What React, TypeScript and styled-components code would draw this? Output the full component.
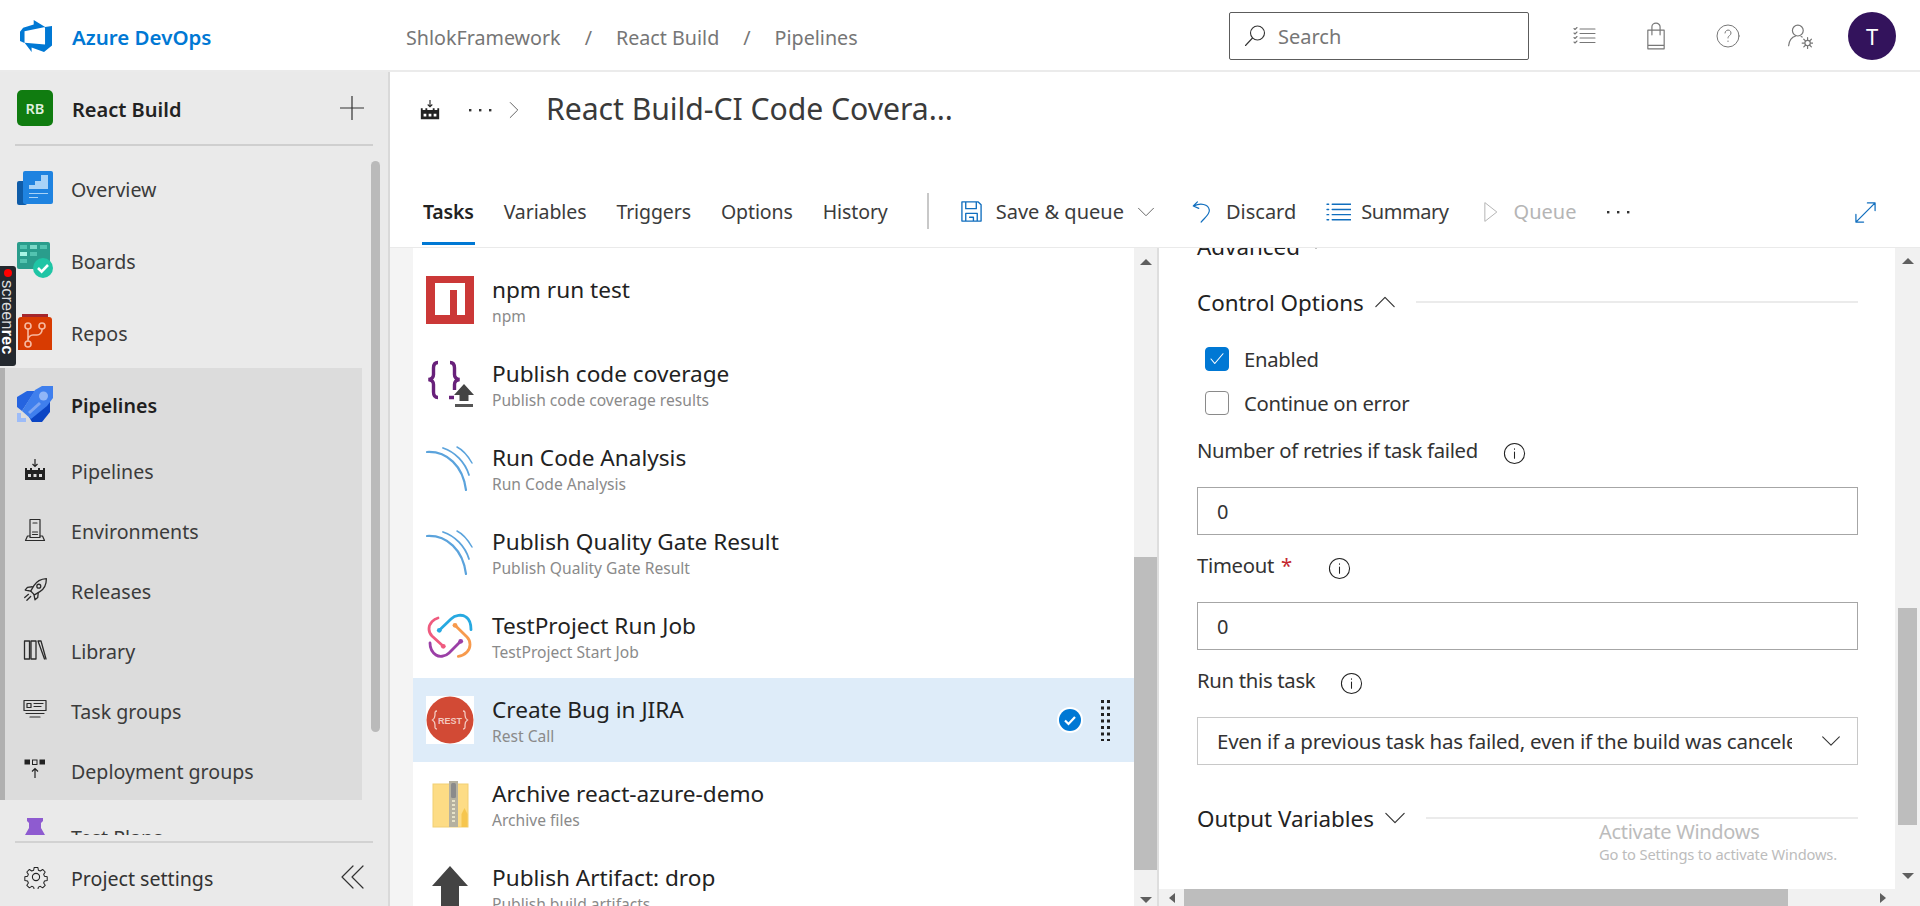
import React from "react";
import styled, { createGlobalStyle } from "styled-components";

const font = `"Noto Sans", "Open Sans", "Liberation Sans", sans-serif`;

const GlobalStyle = createGlobalStyle`
  html, body {
    margin: 0;
    padding: 0;
    background: #fff;
    font-family: ${font};
    color: #333;
  }
  * { box-sizing: border-box; }
`;

const Page = styled.div`
  position: relative;
  width: 1920px;
  height: 906px;
  overflow: hidden;
  display: flex;
  flex-direction: column;
`;

/* ---------- top bar ---------- */
const TopBar = styled.header`
  height: 72px;
  flex: none;
  display: flex;
  align-items: center;
  border-bottom: 2px solid #ebebeb;
  padding: 2px 24px 0 0;
`;
const Brand = styled.div`
  width: 406px;
  padding-left: 18px;
  display: flex;
  align-items: center;
  gap: 18px;
  font-size: 20.5px;
  font-weight: 600;
  color: #0078d4;
`;
const BrandText = styled.span`
  padding-top: 2px;
`;
const Crumbs = styled.nav`
  display: flex;
  align-items: center;
  gap: 24px;
  padding-top: 2px;
  font-size: 19.7px;
  color: #767676;
`;
const SearchBox = styled.div`
  margin-left: auto;
  width: 300px;
  height: 48px;
  border: 1px solid #5c5c5c;
  border-radius: 2px;
  display: flex;
  align-items: center;
  gap: 11px;
  padding-left: 13px;
  font-size: 20px;
  color: #767676;
`;
const HeaderIcons = styled.div`
  margin-left: 19px;
  display: flex;
`;
const HeaderIcon = styled.span`
  width: 72px;
  height: 48px;
  display: flex;
  align-items: center;
  justify-content: center;
  color: #777;
`;
const Avatar = styled.div`
  margin-left: 12px;
  width: 48px;
  height: 48px;
  border-radius: 50%;
  background: #33135c;
  color: #fff;
  font-size: 22px;
  display: flex;
  align-items: center;
  justify-content: center;
`;

/* ---------- sidebar ---------- */
const Body = styled.div`
  flex: 1;
  min-height: 0;
  display: flex;
`;
const Sidebar = styled.aside`
  position: relative;
  width: 390px;
  flex: none;
  display: flex;
  flex-direction: column;
  background: #eaeaea;
  border-right: 2px solid #d9d9d9;
`;
const ProjectRow = styled.div`
  height: 74px;
  flex: none;
  margin: 0 15px;
  padding: 0 2px;
  border-bottom: 2px solid #cfcfcf;
  display: flex;
  align-items: center;
  font-size: 20px;
  font-weight: 600;
  color: #222;
`;
const ProjectTile = styled.div`
  width: 36px;
  height: 36px;
  border-radius: 5px;
  background: #107c10;
  color: #dff0df;
  font-size: 14.5px;
  display: flex;
  align-items: center;
  justify-content: center;
  margin-right: 19px;
`;
const ProjectName = styled.span`
  padding-top: 2px;
`;
const ProjectAdd = styled.span`
  margin-left: auto;
  margin-right: 7px;
  display: flex;
`;
const NavArea = styled.div`
  flex: 1;
  min-height: 0;
  overflow: hidden;
  padding-top: 6px;
`;
const NavItem = styled.div<{ $bold?: boolean }>`
  height: 72px;
  display: flex;
  align-items: center;
  padding-left: 17px;
  gap: 18px;
  font-size: 19.6px;
  font-weight: ${(p) => (p.$bold ? 600 : 400)};
  color: ${(p) => (p.$bold ? "#1f1f1f" : "#3b3b3b")};
`;
const NavLabel = styled.span`
  padding-top: 2px;
`;
const NavIconBox = styled.span`
  width: 36px;
  height: 36px;
  flex: none;
  display: flex;
  align-items: center;
  justify-content: center;
  color: #2b2b2b;
`;
const NavGroup = styled.div`
  width: 362px;
  height: 432px;
  background: #dcdcdc;
  border-left: 5px solid #b0b0b0;
`;
const GroupItem = styled(NavItem)`
  padding-left: 12px;
`;
const SubItem = styled(GroupItem)`
  height: 60px;
`;
const SideThumb = styled.div`
  position: absolute;
  left: 371px;
  top: 89px;
  width: 9px;
  height: 571px;
  border-radius: 5px;
  background: #bababa;
`;
const SideFooter = styled.div`
  height: 65px;
  flex: none;
  margin: 6px 15px 0;
  padding: 4px 9px 0;
  border-top: 2px solid #d2d2d2;
  display: flex;
  align-items: center;
  gap: 23px;
  font-size: 19.6px;
  color: #333;
`;
const FooterLabel = styled.span`
  padding-top: 4px;
`;
const CollapseIcon = styled.span`
  margin-left: auto;
  display: flex;
`;
const RecBadge = styled.div`
  position: absolute;
  left: 0;
  top: 194px;
  width: 16px;
  height: 100px;
  background: #23282e;
  border-radius: 0 3px 3px 0;
  color: #dcdcdc;
  font-family: "Liberation Sans", sans-serif;
  font-size: 16.5px;
  line-height: 17px;
  writing-mode: vertical-rl;
  padding-top: 14px;
  white-space: nowrap;
  overflow: hidden;
  &::before {
    content: "";
    position: absolute;
    left: 4px;
    top: 3px;
    width: 8px;
    height: 8px;
    border-radius: 50%;
    background: #f00;
  }
  b {
    color: #fff;
    font-weight: 700;
  }
`;

/* ---------- main ---------- */
const Main = styled.main`
  flex: 1;
  min-width: 0;
  display: flex;
  flex-direction: column;
`;
const TitleRow = styled.div`
  height: 76px;
  flex: none;
  display: flex;
  align-items: center;
  padding-left: 29px;
  color: #333;
`;
const TitleDots = styled.span`
  margin-left: 27px;
  display: flex;
`;
const TitleChevron = styled.span`
  margin-left: 13px;
  display: flex;
`;
const Title = styled.h1`
  margin: -3px 0 0 23px;
  font-size: 30.2px;
  font-weight: 400;
  color: #3a3a3a;
  letter-spacing: -0.05px;
`;
const TabBar = styled.div`
  height: 70px;
  flex: none;
  margin-top: 30px;
  display: flex;
  align-items: center;
  padding: 0 43px 0 33px;
  border-bottom: 1px solid #eaeaea;
  font-size: 20px;
  color: #3b3b3b;
`;
const Tab = styled.div<{ $active?: boolean }>`
  position: relative;
  align-self: stretch;
  margin-right: 30px;
  padding-bottom: 3px;
  display: flex;
  align-items: center;
  font-size: 19.5px;
  letter-spacing: ${(p) => (p.$active ? "-0.2px" : "-0.1px")};
  font-weight: ${(p) => (p.$active ? 600 : 400)};
  color: ${(p) => (p.$active ? "#222" : "#3b3b3b")};
  ${(p) =>
    p.$active &&
    `&::after {
      content: "";
      position: absolute;
      left: -1px;
      right: -1px;
      bottom: 2px;
      height: 3px;
      background: #0078d4;
    }`}
`;
const ToolSep = styled.div`
  width: 2px;
  height: 36px;
  margin: -4px 31px 0 9px;
  background: #c8c8c8;
`;
const ToolItem = styled.div<{ $gap?: number; $inner?: number; $disabled?: boolean }>`
  display: flex;
  align-items: center;
  gap: ${(p) => p.$inner ?? 13}px;
  padding-bottom: 2px;
  margin-left: ${(p) => p.$gap ?? 0}px;
  color: ${(p) => (p.$disabled ? "#b5b5b5" : "#3b3b3b")};
`;
const NarrowLabel = styled.span`
  letter-spacing: -0.45px;
`;
const ExpandIcon = styled.span`
  margin-left: auto;
  display: flex;
`;
const Panels = styled.div`
  flex: 1;
  min-height: 0;
  display: flex;
`;
const Gutter = styled.div`
  width: 23px;
  flex: none;
  background: #f4f4f4;
`;
const TaskList = styled.div`
  flex: 1;
  min-width: 0;
  overflow: hidden;
  padding-top: 10px;
`;
const TaskRow = styled.div<{ $selected?: boolean }>`
  height: 84px;
  display: flex;
  align-items: center;
  padding: 0 13px;
  background: ${(p) => (p.$selected ? "#deecf9" : "transparent")};
`;
const TaskIcon = styled.span`
  width: 48px;
  height: 48px;
  flex: none;
  display: flex;
  margin-right: 18px;
`;
const TaskText = styled.div`
  flex: 1;
  min-width: 0;
  padding-top: 4px;
  display: flex;
  flex-direction: column;
`;
const TaskName = styled.div`
  font-size: 22.6px;
  line-height: 28px;
  color: #222;
`;
const TaskKind = styled.div`
  margin-top: -1px;
  font-size: 15.6px;
  line-height: 26px;
  color: #8a8a8a;
`;
const TaskState = styled.span`
  display: flex;
  align-items: center;
  gap: 18px;
  margin-right: 11px;
`;

/* ---------- scrollbars ---------- */
const VTrack = styled.div<{ $width: number }>`
  width: ${(p) => p.$width}px;
  flex: none;
  display: flex;
  flex-direction: column;
  align-items: center;
  background: #f1f1f1;
`;
const Arrow = styled.div<{ $dir: "up" | "down" | "left" | "right"; $size: number }>`
  flex: none;
  width: ${(p) => (p.$dir === "up" || p.$dir === "down" ? "100%" : `${p.$size}px`)};
  height: ${(p) => (p.$dir === "up" || p.$dir === "down" ? `${p.$size}px` : "100%")};
  display: flex;
  align-items: center;
  justify-content: center;
  &::before {
    content: "";
    width: 0;
    height: 0;
    border: 5px solid transparent;
    border-width: ${(p) => (p.$dir === "up" || p.$dir === "down" ? "0 6px" : "5px 0")};
    ${(p) => `border-${{ up: "bottom", down: "top", left: "right", right: "left" }[p.$dir]}: 6px solid #5f5f5f;`}
  }
`;
const VThumb = styled.div<{ $top: number; $height: number; $width: number }>`
  flex: none;
  width: ${(p) => p.$width}px;
  height: ${(p) => p.$height}px;
  margin-top: ${(p) => p.$top}px;
  margin-bottom: auto;
  background: #bdbdbd;
`;
const HTrack = styled.div`
  height: 17px;
  flex: none;
  display: flex;
  background: #f1f1f1;
  padding-right: 25px;
`;
const HThumb = styled.div`
  width: 604px;
  margin-right: auto;
  background: #bdbdbd;
`;

/* ---------- right pane ---------- */
const RightPane = styled.section`
  position: relative;
  width: 763px;
  flex: none;
  display: flex;
  flex-direction: column;
  border-left: 2px solid #dedede;
`;
const RightRow = styled.div`
  flex: 1;
  min-height: 0;
  display: flex;
`;
const Form = styled.div`
  flex: 1;
  min-width: 0;
  overflow: hidden;
  padding: 0 37px 0 38px;
`;
const SectionHead = styled.div<{ $top: number }>`
  height: 30px;
  margin-top: ${(p) => p.$top}px;
  display: flex;
  align-items: center;
  gap: 10px;
  font-size: 22.4px;
  color: #222;
  white-space: nowrap;
`;
const HeadLine = styled.div`
  flex: 1;
  height: 2px;
  margin-left: 10px;
  background: #ebebeb;
`;
const CheckRow = styled.div<{ $top?: number }>`
  height: 44px;
  margin-top: ${(p) => p.$top ?? 0}px;
  padding-left: 8px;
  display: flex;
  align-items: center;
  gap: 15px;
  font-size: 20.3px;
  letter-spacing: -0.3px;
  color: #333;
`;
const CheckBox = styled.span<{ $checked?: boolean }>`
  width: 24px;
  height: 24px;
  border-radius: 4px;
  display: flex;
  align-items: center;
  justify-content: center;
  background: ${(p) => (p.$checked ? "#0078d4" : "#fff")};
  border: 1px solid ${(p) => (p.$checked ? "#0078d4" : "#8a8a8a")};
`;
const FieldLabel = styled.div<{ $top: number }>`
  height: 30px;
  margin-top: ${(p) => p.$top}px;
  margin-bottom: 22px;
  display: flex;
  align-items: center;
  font-size: 20.3px;
  letter-spacing: -0.3px;
  color: #333;
`;
const Required = styled.span`
  color: #c4262e;
  margin-left: 7px;
  margin-right: 11px;
`;
const InfoIcon = styled.span`
  margin-left: 25px;
  margin-top: 6px;
  display: flex;
`;
const TextInput = styled.div`
  height: 48px;
  border: 1px solid #a6a6a6;
  padding-left: 19px;
  display: flex;
  align-items: center;
  font-size: 20px;
  color: #333;
`;
const SelectBox = styled(TextInput)`
  border-color: #c8c8c8;
  padding-right: 16px;
  font-size: 20.5px;
  letter-spacing: -0.25px;
`;
const SelectText = styled.span`
  width: 575px;
  overflow: hidden;
  white-space: nowrap;
`;
const SelectChevron = styled.span`
  margin-left: auto;
  display: flex;
`;
const ActivateNote = styled.div`
  position: absolute;
  left: 440px;
  bottom: 41px;
  color: #bcbcbc;
  font-size: 20px;
  line-height: 24px;
  letter-spacing: -0.3px;
  small {
    display: block;
    font-size: 14.7px;
    line-height: 21px;
    letter-spacing: -0.15px;
  }
`;

/* ---------- icons ---------- */
const Line = ({ size, children, color = "currentColor", sw = 1.2 }: { size: number; children: React.ReactNode; color?: string; sw?: number }) => (
  <svg width={size} height={size} viewBox="0 0 24 24" fill="none" stroke={color} strokeWidth={sw} strokeLinecap="round" strokeLinejoin="round">
    {children}
  </svg>
);

const AzureLogo = () => (
  <svg width="36" height="36" viewBox="0 0 18 18">
    <path fill="#0078d4" d="M17 4v9.74l-4 3.28-6.2-2.26V17L3.29 12.41l10.23.8V4.44Zm-3.41.49L7.85 1V3.29L2.58 4.84 1 6.87v4.61l2.26 1V6.57Z" />
  </svg>
);
const OverviewIcon = () => (
  <svg width="36" height="36" viewBox="0 0 36 36">
    <rect x="0" y="11" width="10" height="24" rx="2" fill="#0f5ca8" />
    <rect x="6" y="1" width="30" height="33" rx="2" fill="#1f83e0" />
    <path d="M12 19v-4h6v-4h6V5h7v14z" fill="#a9d3f7" />
    <rect x="12" y="23" width="19" height="1" fill="#a9d3f7" />
    <rect x="12" y="27" width="9" height="1" fill="#a9d3f7" />
  </svg>
);
const BoardsIcon = () => (
  <svg width="36" height="36" viewBox="0 0 36 36">
    <rect x="0" y="0" width="33" height="27" rx="2" fill="#2a9d8c" />
    <rect x="3" y="3" width="7" height="4" fill="#53c3b0" />
    <rect x="13" y="3" width="7" height="4" fill="#7dd9c8" />
    <rect x="23" y="3" width="7" height="4" fill="#53c3b0" />
    <rect x="3" y="10" width="7" height="4" fill="#a8f5e5" />
    <rect x="13" y="10" width="7" height="4" fill="#53c3b0" />
    <rect x="3" y="17" width="7" height="4" fill="#53c3b0" />
    <circle cx="26" cy="26" r="10" fill="#1fc5a5" />
    <path d="M21 26l3.6 3.6 6.4-6.6" fill="none" stroke="#fff" strokeWidth="2.6" />
  </svg>
);
const ReposIcon = () => (
  <svg width="36" height="36" viewBox="0 0 36 36">
    <path d="M5 0h26v6H5z" fill="#a4262c" />
    <path d="M1 6a3 3 0 0 1 3-3h28a3 3 0 0 1 3 3v30H1z" fill="#d83b01" />
    <path d="M3 36V8a4 4 0 0 1 4-4h-3a3 3 0 0 0-3 3v29z" fill="#c23301" />
    <g fill="none" stroke="#f7b9a0" strokeWidth="1.6">
      <circle cx="11" cy="12" r="3" />
      <circle cx="25" cy="12" r="3" />
      <circle cx="11" cy="30" r="3" />
      <path d="M11 15v12M25 15v1a5 5 0 0 1-5 5h-4a5 5 0 0 0-5 5" />
    </g>
  </svg>
);
const PipelinesBrandIcon = () => (
  <svg width="36" height="36" viewBox="0 0 36 36">
    <path d="M0 11l10-6h8L5 25l-5-4z" fill="#2564e0" />
    <path d="M33 14v12l-8 10H15l-3-5z" fill="#0b45c4" />
    <path d="M18 4l7-4h11v12l-6 8-16 13-9-8z" fill="#3f7fed" />
    <circle cx="26.5" cy="10" r="4.5" fill="#91b6f7" />
    <path d="M12 27l11-10" stroke="#7ea6f2" strokeWidth="3" />
    <path d="M0 27h4v5h5v4H0z" fill="#9dbcf8" />
  </svg>
);
const FactoryIcon = ({ size = 24 }: { size?: number }) => (
  <svg width={size} height={size} viewBox="0 0 24 24" fill="none">
    <path d="M12 1v7.5M9.5 6L12 8.5 14.5 6" stroke="#222" strokeWidth="1.2" />
    <path
      fillRule="evenodd"
      d="M2 10h2v2h3v-2h2v2h6v-2h2v2h3v-2h2v12H2z M5 16v3h3v-3z M10.5 16v3h3v-3z M16 16v3h3v-3z"
      fill="#222"
    />
  </svg>
);
const EnvironmentsIcon = () => (
  <Line size={24}>
    <path d="M7 1.5h10v18H7zM9.5 14h5M9.5 16.5h5M10 5h4" />
    <path d="M7 18H4.5L2.5 22.5h19L19.5 18H17" />
  </Line>
);
const ReleasesIcon = () => (
  <Line size={26}>
    <path d="M22.5 1.5c-5 .3-9 2.4-11.5 6.5L8 13l3.5 3.5 5-3c4-2.5 6-6.5 6-12z" />
    <circle cx="15.5" cy="8.5" r="1.8" />
    <path d="M9.5 9L5 9.5 3 12l5 1M15 14.5L14.5 19 12 21l-1-5M6 16l-3.5 3M8 18l-3.5 3.5" />
  </Line>
);
const LibraryIcon = () => (
  <Line size={24} sw={1.3}>
    <path d="M1.5 3h5v18h-5zM8 3h5v18H8zM15 3l6.5 18M18 3l5 18M15 3h3" />
  </Line>
);
const TaskGroupsIcon = () => (
  <Line size={24} sw={1.2}>
    <path d="M1 2.5h22v10H1zM4 5.5h4v4H4zM11 5.5h9M11 8.5h7" />
    <path d="M3 15.5h18M7 19h10" />
  </Line>
);
const DeployGroupsIcon = () => (
  <svg width="24" height="24" viewBox="0 0 24 24" fill="none">
    <rect x="1.5" y="1.5" width="5.5" height="5" fill="#222" />
    <rect x="9.5" y="2" width="4.5" height="4.5" stroke="#222" />
    <rect x="16.5" y="1.5" width="5.5" height="5" fill="#222" />
    <path d="M12 20v-9M9 13.5l3-3 3 3" stroke="#222" strokeWidth="1.2" />
  </svg>
);
const TestPlansIcon = () => (
  <svg width="36" height="36" viewBox="0 0 36 36">
    <path d="M10 0h16v3l-2 2v5l4 7v5H8v-5l4-7V5l-2-2z" fill="#8e5bd0" />
    <path d="M16 22h4v14h-4z" fill="#6b3fb0" />
  </svg>
);
const GearIcon = () => (
  <Line size={24} sw={1.1} color="#222">
    <circle cx="12" cy="12" r="3.6" />
    <path d="M10 1.5h4l.6 3 2.1.9 2.6-1.7 2.8 2.8-1.7 2.6.9 2.1 3 .6v4l-3 .6-.9 2.1 1.7 2.6-2.8 2.8-2.6-1.7-2.1.9-.6 3h-4l-.6-3-2.1-.9-2.6 1.7-2.8-2.8 1.7-2.6-.9-2.1-3-.6v-4l3-.6.9-2.1-1.7-2.6 2.8-2.8 2.6 1.7 2.1-.9z" transform="translate(1.1 1.1) scale(.91)" />
  </Line>
);
const SearchIcon = () => (
  <Line size={24} sw={1.1} color="#333">
    <circle cx="14.5" cy="9" r="7" />
    <path d="M9.5 14L2.5 21.5" />
  </Line>
);
const DotsIcon = ({ width = 24 }: { width?: number }) => (
  <svg width={width} height="4" viewBox="0 0 24 4" fill="#333">
    <rect x="1" y="1" width="2.4" height="2.4" />
    <rect x="11" y="1" width="2.4" height="2.4" />
    <rect x="21" y="1" width="2.4" height="2.4" />
  </svg>
);

const NpmIcon = () => (
  <svg width="48" height="48" viewBox="0 0 48 48">
    <rect width="48" height="48" fill="#cb3837" />
    <path d="M9 7h30v32H31V14h-7v25H9z" fill="#fff" />
  </svg>
);
const CoverageIcon = () => (
  <svg width="48" height="48" viewBox="0 0 48 48" fill="none">
    <path d="M12 2.5C8.5 2.5 7.5 4.5 7.5 8v6.5c0 3-1.7 4.5-5 5 3.3.5 5 2 5 5V32c0 3.5 1 5.5 4.5 5.5" stroke="#68217a" strokeWidth="3.4" />
    <path d="M24 2.5c3.5 0 4.5 2 4.5 5.5v6.5c0 3 1.7 4.5 5 5-3.3.5-5 2-5 5V30M23 37.5h5" stroke="#68217a" strokeWidth="3.4" />
    <path d="M38 24L28 35h5.5v6h9v-6H48z" fill="#444" />
    <rect x="29" y="44" width="18" height="3" fill="#555" />
  </svg>
);
const SonarIcon = () => (
  <svg width="48" height="48" viewBox="0 0 48 48" fill="none" stroke="#5ba3dc" strokeLinecap="round">
    <path d="M1 8c20-1 36 14 39 38" strokeWidth="2.2" />
    <path d="M17 4c12 4 22 14 26 27" strokeWidth="1.8" />
    <path d="M31 3c6 3 11 9 15 16" strokeWidth="1.5" />
  </svg>
);
const TestProjectIcon = () => (
  <svg width="48" height="48" viewBox="0 0 48 48" fill="none" strokeWidth="2.8" strokeLinecap="round">
    <path d="M12 6C8 7 3 11 3 17c0 3 1 5 3 7l11.3 10.3" stroke="#ef5b7f" />
    <path d="M13.3 18.3L25 7c4-4 11-5 15-2 3 2 5 7 5 12.7" stroke="#27a9e1" />
    <path d="M29 13.3L41 25c4 4 4 11 0 15-2 2-5 4-8.7 4.3" stroke="#f79a4d" />
    <path d="M34.7 29.3L23 41c-4 4-10 4-13 2-3-2-6-6-6-12" stroke="#9b3fa6" />
    <circle cx="17.3" cy="34.3" r="2.4" fill="#ef5b7f" />
    <circle cx="13.3" cy="18.3" r="2.4" fill="#27a9e1" />
    <circle cx="29" cy="13.3" r="2.4" fill="#f79a4d" />
    <circle cx="34.7" cy="29.3" r="2.4" fill="#9b3fa6" />
  </svg>
);
const RestIcon = () => (
  <svg width="48" height="48" viewBox="0 0 48 48">
    <rect width="48" height="48" fill="#fff" />
    <circle cx="24" cy="24" r="23.5" fill="#d24a35" />
    <text x="24" y="27.5" textAnchor="middle" fontSize="9" fontWeight="700" fill="#f3c9bf" fontFamily="Liberation Sans, sans-serif">
      REST
    </text>
    <path d="M11 15c-2.5 0-2 2-2 4 0 3-1 4-2.5 5 1.5 1 2.5 2 2.5 5 0 2-.5 4 2 4M37 15c2.5 0 2 2 2 4 0 3 1 4 2.5 5-1.5 1-2.5 2-2.5 5 0 2 .5 4-2 4" fill="none" stroke="#f3c9bf" strokeWidth="1.3" />
  </svg>
);
const ZipIcon = () => (
  <svg width="48" height="48" viewBox="0 0 48 48">
    <rect x="7" y="4" width="35" height="43" fill="#fddc85" />
    <rect x="7" y="4" width="35" height="43" fill="none" stroke="#f1cf74" />
    <rect x="23" y="1" width="9" height="46" fill="#b5b1a0" />
    <rect x="25" y="3" width="5" height="15" rx="1.5" fill="#8b8b8b" />
    <path d="M26 20h3v2h-3zM26 24h3v2h-3zM26 28h3v2h-3zM26 32h3v2h-3zM26 36h3v2h-3zM26 40h3v2h-3z" fill="#e6e2c8" />
    <path d="M35.5 34l3-6 3 6v13h-6z" fill="#f6c64f" />
  </svg>
);
const UpArrowIcon = () => (
  <svg width="48" height="48" viewBox="0 0 48 48">
    <path d="M24 2L6 22h9v26h18V22h9z" fill="#444" />
  </svg>
);
const SelectedCheck = () => (
  <svg width="26" height="26" viewBox="0 0 26 26">
    <circle cx="13" cy="13" r="13" fill="#fff" />
    <circle cx="13" cy="13" r="11" fill="#0078d4" />
    <path d="M8 13.5l3.5 3.5L18 10" fill="none" stroke="#fff" strokeWidth="2.2" />
  </svg>
);
const DragDots = () => (
  <svg width="9" height="41" viewBox="0 0 9 41" fill="#222">
    {[0, 1, 2, 3, 4, 5, 6].map((r) => (
      <g key={r}>
        <rect x="0" y={r * 6.5} width="3" height="3" />
        <rect x="6" y={r * 6.5} width="3" height="3" />
      </g>
    ))}
  </svg>
);
const Info = () => (
  <Line size={23} sw={1.1} color="#222">
    <circle cx="12" cy="12" r="10.5" />
    <path d="M12 10.5v6.5M12 7v.5" />
  </Line>
);
const Chevron = ({ up, size = 22, color = "#333" }: { up?: boolean; size?: number; color?: string }) => (
  <Line size={size} sw={1.3} color={color}>
    <path d={up ? "M2 17L12 7l10 10" : "M2 7l10 10L22 7"} />
  </Line>
);

const sectionItems = [
  { label: "Pipelines", icon: <FactoryIcon /> },
  { label: "Environments", icon: <EnvironmentsIcon /> },
  { label: "Releases", icon: <ReleasesIcon /> },
  { label: "Library", icon: <LibraryIcon /> },
  { label: "Task groups", icon: <TaskGroupsIcon /> },
  { label: "Deployment groups", icon: <DeployGroupsIcon /> },
];

const tasks = [
  { name: "npm run test", kind: "npm", icon: <NpmIcon /> },
  { name: "Publish code coverage", kind: "Publish code coverage results", icon: <CoverageIcon /> },
  { name: "Run Code Analysis", kind: "Run Code Analysis", icon: <SonarIcon /> },
  { name: "Publish Quality Gate Result", kind: "Publish Quality Gate Result", icon: <SonarIcon /> },
  { name: "TestProject Run Job", kind: "TestProject Start Job", icon: <TestProjectIcon /> },
  { name: "Create Bug in JIRA", kind: "Rest Call", icon: <RestIcon />, selected: true },
  { name: "Archive react-azure-demo", kind: "Archive files", icon: <ZipIcon /> },
  { name: "Publish Artifact: drop", kind: "Publish build artifacts", icon: <UpArrowIcon /> },
];

export default function App() {
  return (
    <Page>
      <GlobalStyle />
      <TopBar>
        <Brand>
          <AzureLogo />
          <BrandText>Azure DevOps</BrandText>
        </Brand>
        <Crumbs>
          <span>ShlokFramework</span>
          <span>/</span>
          <span>React Build</span>
          <span>/</span>
          <span>Pipelines</span>
        </Crumbs>
        <SearchBox>
          <SearchIcon />
          Search
        </SearchBox>
        <HeaderIcons>
          <HeaderIcon>
            <Line size={24} sw={1.1}>
              <path d="M8 5h15M8 9.5h15M8 14h15M8 18.5h15M2 4.5l1 1 2-2M2 9l1 1 2-2M2 13.5l1 1 2-2M2 18l1 1 2-2" />
            </Line>
          </HeaderIcon>
          <HeaderIcon>
            <Line size={28} sw={1}>
              <path d="M5 7h14v16H5zM8.5 7V4a3.5 3 0 0 1 7 0v3M8.5 7v4M15.5 7v4M5 20h14" />
            </Line>
          </HeaderIcon>
          <HeaderIcon>
            <Line size={24} sw={1}>
              <circle cx="12" cy="12" r="11" />
              <path d="M9 9a3 3 0 1 1 4.5 2.6c-1 .6-1.5 1.3-1.5 2.4M12 17v.5" />
            </Line>
          </HeaderIcon>
          <HeaderIcon>
            <Line size={26} sw={1.1}>
              <circle cx="10" cy="7" r="5" />
              <path d="M1.5 21c.5-5 3-8 6.5-9M14 13l-1-.5" />
              <circle cx="19" cy="18.5" r="2.5" />
              <path d="M19 13.5v2M19 21.5v2M14 18.5h2M22 18.5h2M15.5 15l1.5 1.5M21 20.5l1.5 1.5M15.5 22l1.5-1.5M21 16.5l1.5-1.5" />
            </Line>
          </HeaderIcon>
        </HeaderIcons>
        <Avatar>T</Avatar>
      </TopBar>
      <Body>
        <Sidebar>
          <ProjectRow>
            <ProjectTile>RB</ProjectTile>
            <ProjectName>React Build</ProjectName>
            <ProjectAdd>
              <Line size={24} sw={1.2} color="#333">
                <path d="M12 0v24M0 12h24" />
              </Line>
            </ProjectAdd>
          </ProjectRow>
          <NavArea>
            <NavItem>
              <NavIconBox>
                <OverviewIcon />
              </NavIconBox>
              <NavLabel>Overview</NavLabel>
            </NavItem>
            <NavItem>
              <NavIconBox>
                <BoardsIcon />
              </NavIconBox>
              <NavLabel>Boards</NavLabel>
            </NavItem>
            <NavItem>
              <NavIconBox>
                <ReposIcon />
              </NavIconBox>
              <NavLabel>Repos</NavLabel>
            </NavItem>
            <NavGroup>
              <GroupItem $bold>
                <NavIconBox>
                  <PipelinesBrandIcon />
                </NavIconBox>
                <NavLabel>Pipelines</NavLabel>
              </GroupItem>
              {sectionItems.map((d) => (
                <SubItem key={d.label}>
                  <NavIconBox>{d.icon}</NavIconBox>
                  <NavLabel>{d.label}</NavLabel>
                </SubItem>
              ))}
            </NavGroup>
            <NavItem>
              <NavIconBox>
                <TestPlansIcon />
              </NavIconBox>
              <NavLabel>Test Plans</NavLabel>
            </NavItem>
          </NavArea>
          <SideFooter>
            <GearIcon />
            <FooterLabel>Project settings</FooterLabel>
            <CollapseIcon>
              <Line size={24} sw={1.2} color="#333">
                <path d="M13 1L2 12l11 11M23 1L12 12l11 11" />
              </Line>
            </CollapseIcon>
          </SideFooter>
          <SideThumb />
          <RecBadge>
            screen<b>rec</b>
          </RecBadge>
        </Sidebar>
        <Main>
          <TitleRow>
            <FactoryIcon size={22} />
            <TitleDots>
              <DotsIcon />
            </TitleDots>
            <TitleChevron>
              <Line size={18} sw={1.2} color="#555">
                <path d="M7 2l10 10L7 22" />
              </Line>
            </TitleChevron>
            <Title>React Build-CI Code Covera...</Title>
          </TitleRow>
          <TabBar>
            <Tab $active>Tasks</Tab>
            <Tab>Variables</Tab>
            <Tab>Triggers</Tab>
            <Tab>Options</Tab>
            <Tab>History</Tab>
            <ToolSep />
            <ToolItem>
              <Line size={23} sw={1.4} color="#106ebe">
                <path d="M2 2h17l3 3v17H2zM6 2v7h11V2M6 22v-8h12v8M10 18h4v4" />
              </Line>
              Save &amp; queue
              <Chevron size={18} color="#666" />
            </ToolItem>
            <ToolItem $gap={36}>
              <Line size={22} sw={1.3} color="#106ebe">
                <path d="M3 5.5C10 2 19 3 20 10c.5 5-6 9-9 13M7 1L2.5 5.5l6 2.5" />
              </Line>
              Discard
            </ToolItem>
            <ToolItem $gap={30} $inner={10}>
              <Line size={25} sw={1.4} color="#106ebe">
                <path d="M6 5h18M6 10h18M6 15h18M6 20h18" />
                <path d="M1 5h1.5M1 10h1.5M1 15h1.5M1 20h1.5" />
              </Line>
              <NarrowLabel>Summary</NarrowLabel>
            </ToolItem>
            <ToolItem $gap={32} $disabled>
              <Line size={20} sw={1.2} color="#b5b5b5">
                <path d="M5 1l14 11L5 23z" />
              </Line>
              Queue
            </ToolItem>
            <ToolItem $gap={29}>
              <DotsIcon width={26} />
            </ToolItem>
            <ExpandIcon>
              <Line size={23} sw={1.3} color="#106ebe">
                <path d="M2 22L22 2M14 2h8v8M2 14v8h8" />
              </Line>
            </ExpandIcon>
          </TabBar>
          <Panels>
            <Gutter />
            <TaskList>
              {tasks.map((t) => (
                <TaskRow key={t.name} $selected={t.selected}>
                  <TaskIcon>{t.icon}</TaskIcon>
                  <TaskText>
                    <TaskName>{t.name}</TaskName>
                    <TaskKind>{t.kind}</TaskKind>
                  </TaskText>
                  {t.selected && (
                    <TaskState>
                      <SelectedCheck />
                      <DragDots />
                    </TaskState>
                  )}
                </TaskRow>
              ))}
            </TaskList>
            <VTrack $width={23}>
              <Arrow $dir="up" $size={28} />
              <VThumb $top={281} $height={313} $width={23} />
              <Arrow $dir="down" $size={12} />
            </VTrack>
            <RightPane>
              <RightRow>
                <Form>
                  <SectionHead $top={-17}>
                    Advanced
                    <Chevron size={12} />
                  </SectionHead>
                  <SectionHead $top={26}>
                    Control Options
                    <Chevron up />
                    <HeadLine />
                  </SectionHead>
                  <CheckRow $top={20}>
                    <CheckBox $checked>
                      <Line size={18} sw={1.5} color="#fff">
                        <path d="M4 12l5 6L20 5" />
                      </Line>
                    </CheckBox>
                    Enabled
                  </CheckRow>
                  <CheckRow>
                    <CheckBox />
                    Continue on error
                  </CheckRow>
                  <FieldLabel $top={10}>
                    Number of retries if task failed
                    <InfoIcon>
                      <Info />
                    </InfoIcon>
                  </FieldLabel>
                  <TextInput>0</TextInput>
                  <FieldLabel $top={15}>
                    Timeout
                    <Required>*</Required>
                    <InfoIcon>
                      <Info />
                    </InfoIcon>
                  </FieldLabel>
                  <TextInput>0</TextInput>
                  <FieldLabel $top={15}>
                    Run this task
                    <InfoIcon>
                      <Info />
                    </InfoIcon>
                  </FieldLabel>
                  <SelectBox>
                    <SelectText>Even if a previous task has failed, even if the build was canceled</SelectText>
                    <SelectChevron>
                      <Chevron size={20} />
                    </SelectChevron>
                  </SelectBox>
                  <SectionHead $top={38}>
                    Output Variables
                    <Chevron />
                    <HeadLine />
                  </SectionHead>
                </Form>
                <VTrack $width={25}>
                  <Arrow $dir="up" $size={26} />
                  <VThumb $top={334} $height={217} $width={19} />
                  <Arrow $dir="down" $size={26} />
                </VTrack>
              </RightRow>
              <HTrack>
                <Arrow $dir="left" $size={25} />
                <HThumb />
                <Arrow $dir="right" $size={25} />
              </HTrack>
              <ActivateNote>
                Activate Windows
                <small>Go to Settings to activate Windows.</small>
              </ActivateNote>
            </RightPane>
          </Panels>
        </Main>
      </Body>
    </Page>
  );
}
